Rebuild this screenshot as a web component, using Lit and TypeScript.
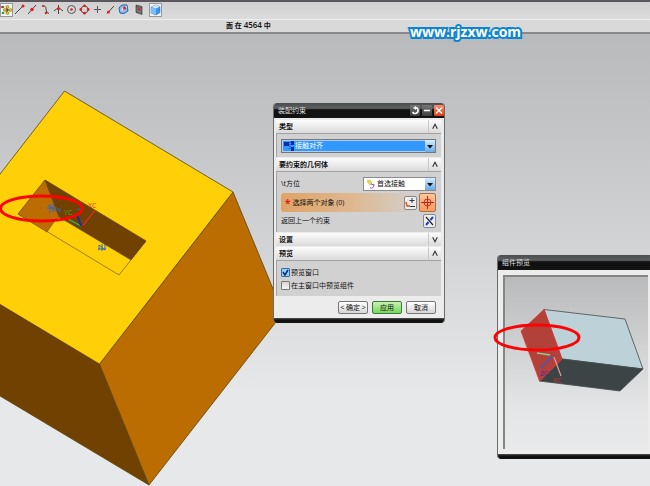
import { LitElement, html, svg, css } from "lit";
import { customElement, property } from "lit/decorators.js";

const tools = [
  { label: "捕捉点", on: true, art: svg`<g fill="#2f9a3c"><circle cx="3" cy="4" r="1.3"/><circle cx="3" cy="10" r="1.3"/></g><path d="M7 3v8M3.500 7h7" stroke="#222"/><g fill="#e8c21c" stroke="#6a5200" stroke-width=".4"><circle cx="7.500" cy="4" r="1.500"/><circle cx="10.500" cy="7" r="1.500"/><circle cx="7.500" cy="10" r="1.500"/><circle cx="5" cy="7" r="1.500"/></g><circle cx="2" cy="4" r="1" fill="#d22"/>` },
  { label: "端点", art: svg`<path d="M2 11L10 3" stroke="#444"/><circle cx="10" cy="3" r="1.500" fill="#d22"/>` },
  { label: "中点", art: svg`<path d="M2 11L10 2" stroke="#444"/><circle cx="6" cy="6.500" r="1.700" fill="#d22"/>` },
  { label: "控制点", art: svg`<path d="M3 3q4-1 4 3t3 4.500" stroke="#444" fill="none"/><circle cx="7" cy="10" r="1.300" fill="#d22"/><circle cx="4" cy="3" r="1" fill="#d22"/>` },
  { label: "交点", art: svg`<path d="M6.500 2v9M2 8q4.500-5 9 0" stroke="#444" fill="none"/><circle cx="6.500" cy="5.500" r="1.600" fill="#d22"/>` },
  { label: "圆心", art: svg`<circle cx="6.500" cy="6.500" r="4" stroke="#555" fill="none"/><circle cx="6.500" cy="6.500" r="1.300" fill="#d22"/>` },
  { label: "象限点", art: svg`<circle cx="6.500" cy="6.500" r="3.500" stroke="#555" fill="none"/><g fill="#d22"><circle cx="6.500" cy="2.800" r="1.400"/><circle cx="6.500" cy="10.200" r="1.400"/><circle cx="2.800" cy="6.500" r="1.400"/><circle cx="10.200" cy="6.500" r="1.400"/></g>` },
  { label: "现有点", art: svg`<path d="M6.500 3v7M3 6.500h7" stroke="#555"/>` },
  { label: "曲线上的点", art: svg`<path d="M3 10.500L10 3" stroke="#444"/><circle cx="4.500" cy="9" r="1.500" fill="#d22"/>` },
  { label: "面上的点", art: svg`<path d="M2 5q2-4 8-3l1 6q-4 4-8 2z" fill="#8fb8ea" stroke="#2b62b4"/><path d="M5 8q0-4 5-4" stroke="#fff" fill="none"/><circle cx="7.500" cy="5" r="1.500" fill="#d22"/>` },
  { label: "小平面", gap: true, art: svg`<path d="M3 2l6 1.500v8L3 9.500z" fill="#5b5b5b" stroke="#333" stroke-width=".6"/><path d="M5 2.500v8M7 3v8M3 5l6 1.500M3 7.500l6 1.500" stroke="#999" stroke-width=".5"/><circle cx="6" cy="6" r="1.200" fill="#d22"/>` },
  { label: "着色", on: true, gap: true, art: svg`<path d="M2 4l5-2 4 1.500v6L7 12 2 10z" fill="#3c94e8" stroke="#1c5fae" stroke-width=".5"/><path d="M2 4l5-2 4 1.500L7 5.500z" fill="#d5ecff"/><path d="M2 4l5 1.500V12l-5-2z" fill="#7dbdf6"/>` },
];

@customElement("tool-strip")
export class ToolStrip extends LitElement {
  static styles = css`
    :host { display: flex; align-items: center; height: 19px; box-sizing: border-box; border-top: 2px solid #5a585c; padding-bottom: 1px; background: linear-gradient(#d0d0d0, #dcdcdc); }
    .tool { width: 13px; height: 14px; padding: 0; border: 0; background: none; display: block; flex: none; }
    .tool.on { background: #f3f4f6; box-shadow: inset 0 0 0 1px #99999c; }
    .tool.gap { margin-left: 3px; }
    .icon { display: block; width: 13px; height: 14px; }
  `;
  render() {
    return tools.map(t => html`<button class="tool ${t.on ? "on" : ""} ${t.gap ? "gap" : ""}" aria-label=${t.label}>
      <svg class="icon" viewBox="0 0 13 14" stroke-width="1">${t.art}</svg></button>`);
  }
}

@customElement("tool-window")
export class ToolWindow extends LitElement {
  @property() heading = "";
  @property({ type: Boolean }) controls = false;
  static styles = css`
    :host { display: block; box-sizing: border-box; border-radius: 4px; overflow: hidden; background: #ececec; border: 1px solid #6b6b6b; border-width: 0 1px; }
    .bar { display: flex; align-items: center; gap: 2px; height: 15px; padding: 0 0 0 4px; background: linear-gradient(#4a4c4e, #5d6061 35%, #111 45%, #131313); }
    .name { flex: 1; margin: 0; font-size: 7px; line-height: 15px; font-weight: 400; color: #ddd; }
    .ctl { width: 10px; height: 11px; padding: 0; border: 0; border-radius: 1px; background: linear-gradient(#777, #3d3d3d); }
    .ctl.close { background: linear-gradient(#ff8a66, #e23a16); }
    .icon { display: block; width: 10px; height: 11px; }
    .foot { height: 5px; background: linear-gradient(#555, #111 40%); }
  `;
  render() {
    return html`<header class="bar"><h2 class="name">${this.heading}</h2>
      ${this.controls ? html`
        <button class="ctl" aria-label="重置"><svg class="icon" viewBox="0 0 10 11"><path d="M5 2.500a3 3 0 1 1-2.500 4.500" fill="none" stroke="#fff" stroke-width="1.500"/><path d="M6 1v4L3 3z" fill="#fff"/></svg></button>
        <button class="ctl" aria-label="最小化"><svg class="icon" viewBox="0 0 10 11"><path d="M2 5.500h6" stroke="#fff" stroke-width="1.500"/></svg></button>
        <button class="ctl close" aria-label="关闭"><svg class="icon" viewBox="0 0 10 11"><path d="M2 2.500l6 6M8 2.500l-6 6" stroke="#fff" stroke-width="1.500"/></svg></button>` : ""}
      </header><slot></slot><div class="foot"></div>`;
  }
}

@customElement("fold-group")
export class FoldGroup extends LitElement {
  @property() heading = "";
  @property({ type: Boolean }) open = false;
  static styles = css`
    :host { display: block; }
    .head { display: flex; width: 100%; height: 13px; padding: 0 0 0 3px; border: 0; background: linear-gradient(#fcfcfc, #dadada); font: inherit; font-weight: 700; line-height: 13px; color: #111; text-align: left; }
    .name { flex: 1; }
    .icon { width: 13px; height: 13px; border-left: 1px solid #c9c9c9; box-sizing: border-box; }
    .body { background: #d1d1d1; border: 1px solid #a2a2a2; border-width: 1px 0 0 1px; padding: 5px 5px 4px 4px; }
  `;
  render() {
    return html`<button class="head" aria-expanded=${this.open}><span class="name">${this.heading}</span>
      <svg class="icon" viewBox="0 0 13 13"><path d=${this.open ? "M4 9l2.500-5 2.500 5" : "M4 4l2.500 5L9 4"} fill="none" stroke="#333" stroke-width="1.200"/></svg></button>
      ${this.open ? html`<div class="body"><slot></slot></div>` : ""}`;
  }
}

@customElement("app-root")
export class AppRoot extends LitElement {
  static styles = css`
    :host { display: flex; flex-direction: column; position: relative; min-height: 100vh; overflow: hidden; font: 7px/10px "Open Sans", "Noto Sans CJK SC", sans-serif; color: #111; }
    button, select, input { font: inherit; color: inherit; }
    tool-strip, .status { position: relative; }
    .status { height: 15px; box-sizing: border-box; border-top: 1px solid #eee; border-bottom: 2px solid #88898b; background: #d9d9d9; padding-left: 226px; font-weight: 600; font-size: 8px; line-height: 10px; white-space: pre; }
    .status span { font-size: 7px; font-weight: 700; }
    .canvas { flex: 1; background: linear-gradient(#b8babc, #c3c4c6 20%, #d3d5d7 50%, #e6e8ea 80%); }
    .scene { position: absolute; inset: 0; width: 100%; height: 100%; pointer-events: none; }
    .site { position: absolute; left: 410px; top: 22px; font: 700 14px/20px "Open Sans", sans-serif; color: #fff; -webkit-text-stroke: 4px #0c86d2; paint-order: stroke fill; text-decoration: none; }
    .constraint { position: absolute; left: 273px; top: 103px; width: 172px; }
    .groups { display: flex; flex-direction: column; gap: 1px; padding: 2px 3px 0 2px; }
    .combo { display: flex; align-items: center; height: 14px; box-sizing: border-box; border: 1px solid #8c8c8c; background: #fff; }
    .combo.hot { border-color: #777; box-shadow: inset 0 0 0 1px #b7cde6; background: #3198fe; color: #fff; }
    .combo.short { width: 73px; }
    .pick { flex: 1; min-width: 0; appearance: none; border: 0; padding: 0; background: none; height: 12px; line-height: 12px; outline: 0; }
    .lead { width: 11px; height: 10px; margin-left: 2px; flex: none; }
    .arrow { width: 10px; height: 12px; background: linear-gradient(#d8ecff, #66abe9); flex: none; pointer-events: none; }
    .row { display: flex; align-items: center; justify-content: space-between; height: 14px; }
    .target { height: 19px; margin: 2px 0; background: linear-gradient(90deg, #e0a366, #dfb78e 45%, #d1d1d1 90%); border-radius: 3px; gap: 2px; }
    .prompt { flex: 1; padding-left: 4px; }
    .star { color: #d8201a; font-weight: 700; font-size: 10px; margin-right: 2px; vertical-align: -2px; }
    .sq { width: 13px; height: 14px; padding: 0; border: 1px solid #888; border-radius: 2px; background: #eee; flex: none; }
    .sq.big { width: 17px; height: 19px; background: linear-gradient(#ffc69d, #ff9a5d); border-color: #a3714d; }
    .sq svg { display: block; width: 100%; height: 100%; }
    .check { display: flex; align-items: center; height: 13px; gap: 1px; }
    .tick { appearance: none; width: 9px; height: 9px; margin: 0; border: 1px solid #777; border-radius: 1px; background: linear-gradient(#d5d5d5, #f6f6f6); }
    .tick:checked { background: url("data:image/svg+xml,%3Csvg xmlns='http://www.w3.org/2000/svg' viewBox='0 0 9 9'%3E%3Cpath d='M2 4l2 3 3-5' fill='none' stroke='%23112b70' stroke-width='1.500'/%3E%3C/svg%3E") center / 9px 9px, #8bd0fa; border-color: #3e6e96; }
    .actions { display: flex; justify-content: flex-end; gap: 4px; padding: 5px 8px 4px; }
    .act { width: 30px; height: 13px; padding: 0; border: 1px solid #777; border-radius: 2px; background: linear-gradient(#fff, #d6d6d6); line-height: 10px; white-space: nowrap; }
    .act.go { border-color: #3b7a35; background: linear-gradient(#c9f3b4, #75d75c); }
    .preview { position: absolute; left: 497px; right: -4px; top: 255px; }
    .view { margin: 5px; height: 174px; box-sizing: border-box; border: 2px solid #858585; border-right: 0; border-bottom-width: 0; background: linear-gradient(#b8babc, #e3e5e7 75%, #e7e9eb); }
    .model { display: block; width: 100%; height: 172px; }
    .tag { font: 7px "Open Sans", sans-serif; }
  `;
  render() {
    return html`
      <tool-strip></tool-strip>
      <div class="status"><span>面 在 </span>4564<span> 中</span></div>
      <main class="canvas">
        <svg class="scene" aria-hidden="true">
          <g stroke="#5a4410" stroke-width=".8">
            <path d="M-69 263L99.500 364 149 485-20 384z" fill="#704100"/>
            <path d="M233 192L283 313 149 485 99.500 364z" fill="#bc6d02"/>
            <path d="M64.500 91L233 192 99.500 364-69 263z" fill="#ffd008"/>
            <path d="M45 180L146 241 119 275 18 214z" fill="#ffd008" stroke-width=".6"/>
            <path d="M45 180L18 214 47 232 56 219 60 217z" fill="#bc6d02" stroke-width=".5"/>
            <path d="M45 180L146 241 131 260 59 217z" fill="#704100" stroke-width=".5"/>
          </g>
          <g fill="none">
            <path d="M83 225.500L95 210" stroke="#ef2b3c" stroke-width="1.200"/>
            <path d="M81 226L68 219" stroke="#2ec04a" stroke-width="1.200"/>
            <path d="M81 226L77.500 216" stroke="#1428b4" stroke-width="1.800"/>
            <path d="M47 208h10M50 204v9M53 204v8M48 205l8 6M57 209l3 2M60 208v4M77 209l4 1M99 245l6 5M99 245v5M105 244v6M102 244v7M98 249h8" stroke="#3066c4"/>
          </g>
          <text class="tag" x="88" y="208" fill="#e03428">XC</text>
          <text class="tag" x="64" y="215" fill="#4aa51c">YC</text>
        </svg>
      </main>
      <a class="site" href="#">www.rjzxw.com</a>

      <tool-window class="constraint" heading="装配约束" controls>
        <div class="groups">
          <fold-group heading="类型" open>
            <div class="combo hot">
              <svg class="lead" viewBox="0 0 11 10"><path d="M0 1h5v4H0zM7 0h3v4H7zM7 6h3v4H7z" fill="#0b2fa8"/><path d="M6 1v8" stroke="#0b2fa8" stroke-dasharray="1 1"/></svg>
              <select class="pick" aria-label="类型"><option>接触对齐</option></select>
              <svg class="arrow" viewBox="0 0 10 12"><path d="M2 5h6L5 8.500z" fill="#111"/></svg>
            </div>
          </fold-group>
          <fold-group heading="要约束的几何体" open>
            <div class="row"><label for="dir">\\t方位</label>
              <div class="combo short">
                <svg class="lead" viewBox="0 0 11 10"><path d="M1 2l3-1 2 3-2 2z" fill="#f0dc50" stroke="#b8a020" stroke-width=".5"/><path d="M4 9q4 1 4-4M5 5l3 1" stroke="#a050b8" fill="none"/></svg>
                <select class="pick" id="dir"><option>首选接触</option></select>
                <svg class="arrow" viewBox="0 0 10 12"><path d="M2 5h6L5 8.500z" fill="#111"/></svg>
              </div></div>
            <div class="row target"><span class="prompt"><span class="star">*</span>选择两个对象 (0)</span>
              <button class="sq" aria-label="点构造器"><svg viewBox="0 0 11 12"><path d="M7 1v5M4.500 3.500h5M5 9.500h5" stroke="#333"/><path d="M1 5l1 4h3" stroke="#e0551a" stroke-width="1.500" fill="none"/></svg></button>
              <button class="sq big" aria-label="选择对象"><svg viewBox="0 0 15 17"><circle cx="7.500" cy="8.500" r="3.500" fill="none" stroke="#d42a12"/><path d="M7.500 2v13M1 8.500h13" stroke="#c0281a"/></svg></button></div>
            <div class="row"><span>返回上一个约束</span>
              <button class="sq" aria-label="返回上一个约束"><svg viewBox="0 0 11 12"><path d="M2 2l7 8" stroke="#222" stroke-width="1.200"/><path d="M9 2L6.500 5M4.500 7L2 10" stroke="#1c40d0" stroke-width="2"/></svg></button></div>
          </fold-group>
          <fold-group heading="设置"></fold-group>
          <fold-group heading="预览" open>
            <label class="check"><input class="tick" type="checkbox" checked>预览窗口</label>
            <label class="check"><input class="tick" type="checkbox">在主窗口中预览组件</label>
          </fold-group>
        </div>
        <div class="actions"><button class="act">&lt; 确定 &gt;</button><button class="act go">应用</button><button class="act">取消</button></div>
      </tool-window>

      <tool-window class="preview" heading="组件预览">
        <div class="view"><svg class="model" aria-hidden="true">
          <g transform="translate(-505 -277)">
            <g stroke="#444b4d" stroke-width=".8">
              <path d="M544 309.500L625 319 643 369 562 359z" fill="#bdd1d8"/>
              <path d="M562 359L643 369 620 391 539.500 381z" fill="#3c4446"/>
              <path d="M544 309.500L562 359 539.500 381 521 331z" fill="#b2413a" stroke="#e8322c"/>
            </g>
            <path d="M553 356L540 368" stroke="#3c5cc8" stroke-width="1.500"/>
            <path d="M537 353l13 2" stroke="#8fc98c" stroke-width="1.500"/>
            <path d="M554 357l7 19" stroke="#e89a94" stroke-width="1.200"/>
            <text class="tag" x="540" y="376" fill="#3a28b8">ZC</text>
            <text class="tag" x="553" y="383" fill="#d02c28">XC</text>
          </g></svg></div>
      </tool-window>

      <svg class="scene" aria-hidden="true"><g fill="none" stroke="#fa0505" stroke-width="3">
        <ellipse cx="41.500" cy="208.500" rx="41" ry="12.500"/><ellipse cx="537" cy="337.500" rx="42" ry="12.500"/></g></svg>`;
  }
}
